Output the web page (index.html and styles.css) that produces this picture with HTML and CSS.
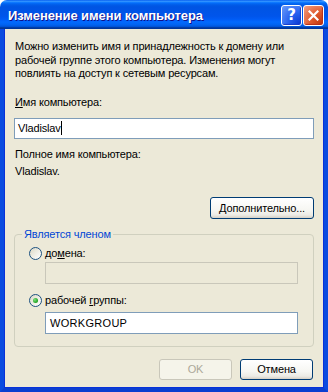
FILE: index.html
```html
<!DOCTYPE html>
<html lang="ru">
<head>
<meta charset="utf-8">
<title>Изменение имени компьютера</title>
<link rel="stylesheet" href="styles.css">
</head>
<body>
<div class="window">
  <div class="titlebar">
    <span class="title">Изменение имени компьютера</span>
    <div class="controls">
      <span class="ctl help">?</span>
      <span class="ctl close"><svg width="11" height="11" viewBox="0 0 11 11"><path d="M1.5 1.5 L9.5 9.5 M9.5 1.5 L1.5 9.5" stroke="#fff" stroke-width="2.2" stroke-linecap="square"/></svg></span>
    </div>
  </div>
  <div class="frame">
    <p class="intro">Можно изменить имя и принадлежность к домену или<br>рабочей группе этого компьютера. Изменения могут<br>повлиять на доступ к сетевым ресурсам.</p>
    <div class="lbl"><u>И</u>мя компьютера:</div>
    <div class="field main-field"><span>Vladislav</span><span class="caret"></span></div>
    <div class="full-label">Полное имя компьютера:</div>
    <div class="full-value">Vladislav.</div>
    <div class="row-right"><button class="btn more"><u>Д</u>ополнительно...</button></div>
    <div class="group">
      <span class="legend">Является членом</span>
      <div class="opt first"><span class="radio"></span><span>до<u>м</u>ена:</span></div>
      <div class="field sub disabled"></div>
      <div class="opt second"><span class="radio checked"></span><span>рабочей <u>г</u>руппы:</span></div>
      <div class="field sub">WORKGROUP</div>
    </div>
    <div class="actions">
      <button class="btn action" disabled>OK</button>
      <button class="btn action">Отмена</button>
    </div>
  </div>
</div>
</body>
</html>
```
FILE: styles.css
```css
html, body {
  margin: 0;
  padding: 0;
  background: #ffffff;
}
.window {
  width: 328px;
  height: 392px;
  display: flex;
  flex-direction: column;
  font-family: "Liberation Sans", Arial, sans-serif;
  font-size: 11px;
  letter-spacing: -0.15px;
  color: #000;
}
.titlebar {
  height: 29px;
  flex: none;
  display: flex;
  align-items: center;
  justify-content: space-between;
  padding: 0 4px 0 8px;
  border-radius: 7px 7px 0 0;
  background: linear-gradient(180deg, #0058EE 0%, #3593FF 4%, #288EFF 6%, #127DFF 8%, #036FFC 10%, #0262EE 14%, #0057E5 20%, #0054E3 24%, #0055EB 56%, #005BF5 66%, #026AFE 76%, #0062EF 86%, #0052D6 92%, #0040AB 94%, #003092 100%);
}
.title {
  color: #fff;
  font-weight: bold;
  font-size: 13px;
  letter-spacing: -0.1px;
  text-shadow: 1px 1px 0 #0F1089;
  padding-top: 1px;
}
.controls {
  display: flex;
  gap: 1px;
  padding-top: 1px;
}
.ctl {
  width: 19px;
  height: 19px;
  border: 1px solid #fff;
  border-radius: 3px;
  display: flex;
  align-items: center;
  justify-content: center;
  color: #fff;
  font-weight: bold;
  font-size: 15px;
  letter-spacing: 0;
  font-family: "DejaVu Sans", sans-serif;
}
.help {
  background: radial-gradient(circle at 90% 90%, #0D3DD6 0%, #2963F0 45%, #6B9CFA 100%);
  box-shadow: inset -1px -1px 1px #1A3CC8;
}
.close {
  background: radial-gradient(circle at 90% 90%, #C33A10 0%, #E05A2D 45%, #F1A085 100%);
  box-shadow: inset -1px -1px 1px #B5301A;
}
.frame {
  flex: 1;
  background: #ECE9D8;
  border-left: 4px solid #0A4BE0;
  border-right: 4px solid #0A4BE0;
  border-bottom: 4px solid #0A3FD0;
  box-shadow: inset 1px 0 0 #0831D9, inset -1px 0 0 #0831D9, inset 0 -1px 0 #0831D9;
  padding: 0 10px;
  display: flex;
  flex-direction: column;
}
.intro {
  margin: 11px 0 0 1px;
  line-height: 13.5px;
}
.lbl {
  margin: 15px 0 0 1px;
  line-height: 13px;
}
.field {
  box-sizing: border-box;
  height: 21px;
  border: 1px solid #7F9DB9;
  background: #fff;
  display: flex;
  align-items: center;
  padding-left: 3px;
}
.main-field {
  margin-top: 9px;
}
.caret {
  display: inline-block;
  width: 1px;
  height: 14px;
  background: #000;
  margin-left: 0;
}
.full-label {
  margin: 9px 0 0 1px;
  line-height: 13px;
}
.full-value {
  margin: 4px 0 0 1px;
  line-height: 13px;
}
.row-right {
  display: flex;
  justify-content: flex-end;
  margin-top: 19px;
}
.btn {
  box-sizing: border-box;
  font-family: "Liberation Sans", Arial, sans-serif;
  font-size: 11px;
  letter-spacing: -0.15px;
  color: #000;
  height: 22px;
  border: 1px solid #003C74;
  border-radius: 3px;
  background: linear-gradient(180deg, #FFFFFF 0%, #F6F6F2 60%, #ECEBE5 85%, #D6D0C5 100%);
  padding: 0;
}
.more {
  width: 104px;
}
.btn:disabled {
  color: #ACA899;
  border-color: #C9C7BA;
  background: #F5F4EA;
}
.group {
  margin-top: 15px;
  border: 1px solid #D0D0BF;
  border-radius: 4px;
  padding: 0 15px 12px 14px;
  display: flex;
  flex-direction: column;
}
.legend {
  align-self: flex-start;
  margin: -7px 0 0 -7px;
  padding: 0 2px;
  background: #ECE9D8;
  color: #0046D5;
  line-height: 13px;
}
.opt {
  display: flex;
  align-items: center;
  gap: 3px;
  line-height: 13px;
}
.opt.first {
  margin-top: 6px;
}
.opt.second {
  margin-top: 10px;
}
.radio {
  box-sizing: border-box;
  width: 13px;
  height: 13px;
  border: 1px solid #1C5180;
  border-radius: 50%;
  background: linear-gradient(135deg, #DCD9C5 0%, #F2F1EA 60%, #FFFFFF 100%);
  display: flex;
  align-items: center;
  justify-content: center;
}
.radio.checked::after {
  content: "";
  width: 5px;
  height: 5px;
  border-radius: 50%;
  background: radial-gradient(circle at 35% 35%, #7BE07B 0%, #21A121 70%);
}
.field.sub {
  margin-left: 16px;
  height: 22px;
  margin-top: 2px;
  padding-left: 4px;
  letter-spacing: 0.3px;
}
.opt.second + .field.sub {
  margin-top: 5px;
}
.field.disabled {
  background: #ECE9D8;
  border-color: #C9C7BA;
}
.actions {
  display: flex;
  justify-content: flex-end;
  gap: 8px;
  margin-top: 12px;
  padding-right: 1px;
}
.action {
  width: 73px;
  height: 21px;
}
```
